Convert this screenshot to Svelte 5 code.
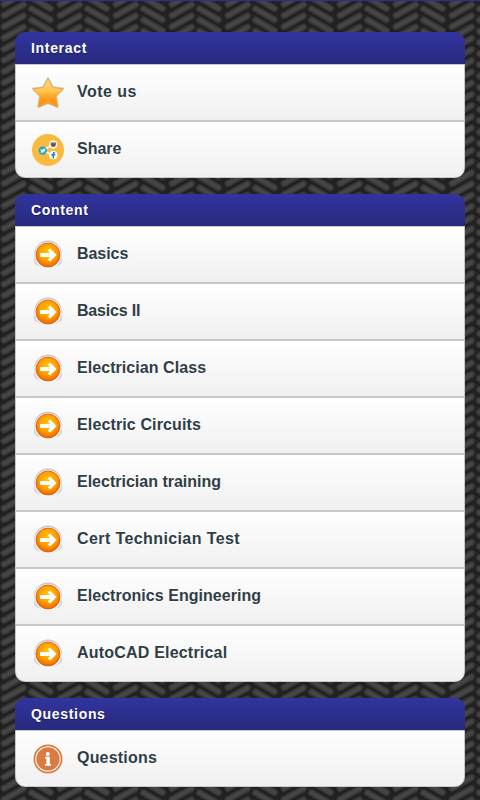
<script>
    // tracking is the letter spacing of a label in px
    const sections = [
        {
            title: "Interact",
            items: [
                {label: "Vote us", icon: "star", tracking: 0.45},
                {label: "Share", icon: "share", tracking: 0}
            ]
        },
        {
            title: "Content",
            items: [
                {label: "Basics", icon: "arrow", tracking: -0.05},
                {label: "Basics II", icon: "arrow", tracking: -0.2},
                {label: "Electrician Class", icon: "arrow", tracking: 0.06},
                {label: "Electric Circuits", icon: "arrow", tracking: 0.13},
                {label: "Electrician training", icon: "arrow", tracking: 0},
                {label: "Cert Technician Test", icon: "arrow", tracking: 0.4},
                {label: "Electronics Engineering", icon: "arrow", tracking: 0.04},
                {label: "AutoCAD Electrical", icon: "arrow", tracking: 0.2}
            ]
        },
        {
            title: "Questions",
            items: [
                {label: "Questions", icon: "info", tracking: 0.2}
            ]
        }
    ];

    // one tread tile is 56px square and holds five pairs of ribs
    const ribs = [-2, -1, 0, 1, 2, 3, 4, 5].map((i)=>{
        const y = i * 11.2;
        const up = `M4 ${y + 15.5}L23.5 ${y + 4.7}`;
        const down = `M31.5 ${y + 8.7}L50.5 ${y + 19.7}`;
        const d = up + down;
        return `<path d='${d}' stroke='#343434' stroke-width='7'/><path d='${d}' stroke='#3d3d3d' stroke-width='5'/><path d='${d}' stroke='#464646' stroke-width='2.5'/>`;
    }).join("");
    const tile = `<svg xmlns='http://www.w3.org/2000/svg' width='56' height='56'><rect width='56' height='56' fill='#212121'/><g fill='none' stroke-linecap='round'>${ribs}</g></svg>`;
    const tread = `url("data:image/svg+xml,${encodeURIComponent(tile)}")`;
</script>

<svg class="defs" width="0" height="0">
    <defs>
        <linearGradient id="starFill" x1="0" y1="0" x2="0" y2="1">
            <stop offset="0" stop-color="#ffe08a"></stop>
            <stop offset="0.45" stop-color="#ffc552"></stop>
            <stop offset="0.6" stop-color="#ffa827"></stop>
            <stop offset="1" stop-color="#ff8c12"></stop>
        </linearGradient>
        <radialGradient id="arrowFill" cx="0.5" cy="0.4" r="0.6">
            <stop offset="0" stop-color="#ffcc00"></stop>
            <stop offset="0.6" stop-color="#ff9d00"></stop>
            <stop offset="1" stop-color="#ec6400"></stop>
        </radialGradient>
    </defs>
</svg>

<div class="page" style:background-image={tread}>
    {#each sections as section}
        <section>
            <h2>{section.title}</h2>
            <ul>
                {#each section.items as item}
                    <li>
                        <svg class="icon" width="32" height="32" viewBox="0 0 32 32">
                            {#if item.icon === "star"}
                                <path d="M16 1.4L20.8 10.5L31 11.8L23.9 19L25.7 30L16 26L6.3 30L8.1 19L1 11.8L11.2 10.5Z" fill="none" stroke="#a09880" stroke-opacity="0.4" stroke-width="2.4" stroke-linejoin="round"></path>
                                <path d="M16 1.4L20.8 10.5L31 11.8L23.9 19L25.7 30L16 26L6.3 30L8.1 19L1 11.8L11.2 10.5Z" fill="url(#starFill)" stroke="#f0a63a" stroke-width="1" stroke-linejoin="round"></path>
                            {:else if item.icon === "share"}
                                <circle cx="16" cy="16" r="16" fill="#f9bb3f"></circle>
                                <path d="M21.5 10.5L10.5 16.5L21.5 21.5" fill="none" stroke="#fff" stroke-width="1.6"></path>
                                <circle cx="21.3" cy="10.6" r="4.1" fill="#fff"></circle>
                                <circle cx="21.3" cy="21.2" r="4.1" fill="#fff"></circle>
                                <circle cx="10.7" cy="16.6" r="4.2" fill="#1eaad0"></circle>
                                <path d="M18.7 8.4H23.9V10.2L22.9 12.7H19.7L18.7 10.2Z" fill="#6b4640"></path>
                                <path d="M18.9 9.8H23.7" stroke="#a77e74" stroke-width="0.7"></path>
                                <path d="M8.2 15.2L10.4 16L11.5 14.6L13.2 14.8L12.7 17.2L10.8 18.8L8.2 18.3L9.3 17.5Z" fill="#fff"></path>
                                <path d="M23 18.8Q21.3 18.5 21.3 20V24.6M19.3 20.8H23.3" fill="none" stroke="#168eb5" stroke-width="1.6"></path>
                            {:else if item.icon === "arrow"}
                                <ellipse cx="16" cy="21.5" rx="14.3" ry="7.5" fill="#d8d8db"></ellipse>
                                <circle cx="16" cy="15.2" r="13.8" fill="#c8c8cc"></circle>
                                <circle cx="16" cy="16.4" r="13.3" fill="#fafafa"></circle>
                                <circle cx="16" cy="16" r="12" fill="url(#arrowFill)" stroke="#d9540a" stroke-width="0.8"></circle>
                                <path d="M8 13.9H18.2L15.8 11.6L18.2 9.4L24.6 16L18.2 22.6L15.8 20.4L18.2 18.1H8Z" fill="#fff"></path>
                            {:else}
                                <circle cx="16" cy="16" r="14.5" fill="#d87c43"></circle>
                                <circle cx="16" cy="16" r="12.2" fill="none" stroke="#fff" stroke-width="1.1"></circle>
                                <circle cx="15.8" cy="11" r="1.9" fill="#fff"></circle>
                                <path d="M13 13.8H17.8V21H19V22.7H13V21H14.4V15.5H13Z" fill="#fff"></path>
                            {/if}
                        </svg>
                        <span style:letter-spacing="{item.tracking}px">{item.label}</span>
                    </li>
                {/each}
            </ul>
        </section>
    {/each}
</div>

<style>
    :global(body){
        margin: 0;
        background: #222;
    }

    .defs{
        display: block;
    }

    .page{
        box-sizing: border-box;
        height: 800px;
        overflow: hidden;
        padding: 31px 15px 0;
        border-top: 1px solid #2e3192;
        background-position: 0 -1px;
        font-family: "Liberation Sans", Arial, sans-serif;
        font-weight: bold;
    }

    section{
        margin-bottom: 16px;
    }

    h2{
        box-sizing: border-box;
        height: 32px;
        margin: 0;
        padding-left: 16px;
        border-radius: 10px 10px 0 0;
        background: linear-gradient(#3234a0, #272a7c);
        color: #fff;
        font-size: 14px;
        line-height: 32px;
        letter-spacing: 0.68px;
        text-shadow: 0 1px 1px rgba(0, 0, 0, 0.4);
    }

    ul{
        margin: 0;
        padding: 0;
        list-style: none;
    }

    li{
        box-sizing: border-box;
        display: flex;
        align-items: center;
        gap: 13px;
        height: 57px;
        padding-left: 16px;
        border: 1px solid #c8c8c8;
        background: linear-gradient(#fff, #f0f0f0);
        color: #2f3e46;
        font-size: 16px;
        text-shadow: 0 1px 0 #fff;
    }

    li:last-child{
        border-radius: 0 0 10px 10px;
    }

    .icon{
        flex: none;
    }

    span{
        line-height: 18px;
        padding-bottom: 1px;
    }
</style>
